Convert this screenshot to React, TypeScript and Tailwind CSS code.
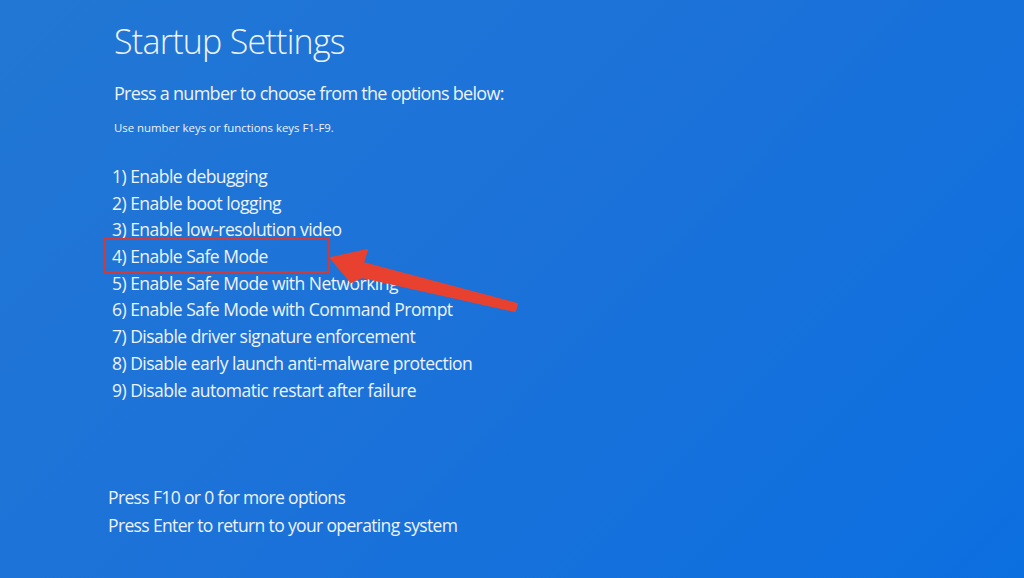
const options = [
	'1) Enable debugging',
	'2) Enable boot logging',
	'3) Enable low-resolution video',
	'4) Enable Safe Mode',
	'5) Enable Safe Mode with Networking',
	'6) Enable Safe Mode with Command Prompt',
	'7) Disable driver signature enforcement',
	'8) Disable early launch anti-malware protection',
	'9) Disable automatic restart after failure',
]

export default function App() {
	return (
		<div className="relative h-[578px] w-[1024px] overflow-hidden bg-[linear-gradient(135deg,#2277d4_0%,#1c72d8_45%,#0c6fe0_100%)] font-['Open_Sans','Noto_Sans',sans-serif] text-[#eef3fb]">
			<div className="flex flex-col pl-[114px] pt-[21px]">
				<h1 className="text-[34px] font-light leading-[40px] tracking-[-0.75px]">Startup Settings</h1>
				<div className="mt-[20px] text-[18px] leading-[24px] tracking-[-0.72px]">Press a number to choose from the options below:</div>
				<div className="mt-[15px] text-[11.4px] leading-[16px]">Use number keys or functions keys F1-F9.</div>

				<div className="mt-[27px] flex flex-col">
					{options.map((label, index) => (
						<div key={index} className="relative h-[26.7px] text-[17.5px] leading-[26.7px] tracking-[-0.52px] -ml-[2px]">
							{index === 3 &&
								<span className="absolute -left-[8px] -top-[5px] h-[35px] w-[226px] border-2 border-[#cd3b3d]"></span>
							}
							{label}
						</div>
					))}
				</div>

				<div className="mt-[80px] flex flex-col -ml-[6px] text-[17.5px] leading-[28px] tracking-[-0.64px]">
					<div>Press F10 or 0 for more options</div>
					<div>Press Enter to return to your operating system</div>
				</div>
			</div>

			<svg className="pointer-events-none absolute left-0 top-0" width="1024" height="578" viewBox="0 0 1024 578">
				<polygon
					points="331,258 367,250 363,263 517,304 515,311 362,277 351,282"
					fill="#e8412f"
					stroke="#e8412f"
					strokeWidth="2"
					strokeLinejoin="round"
				/>
			</svg>
		</div>
	)
}
